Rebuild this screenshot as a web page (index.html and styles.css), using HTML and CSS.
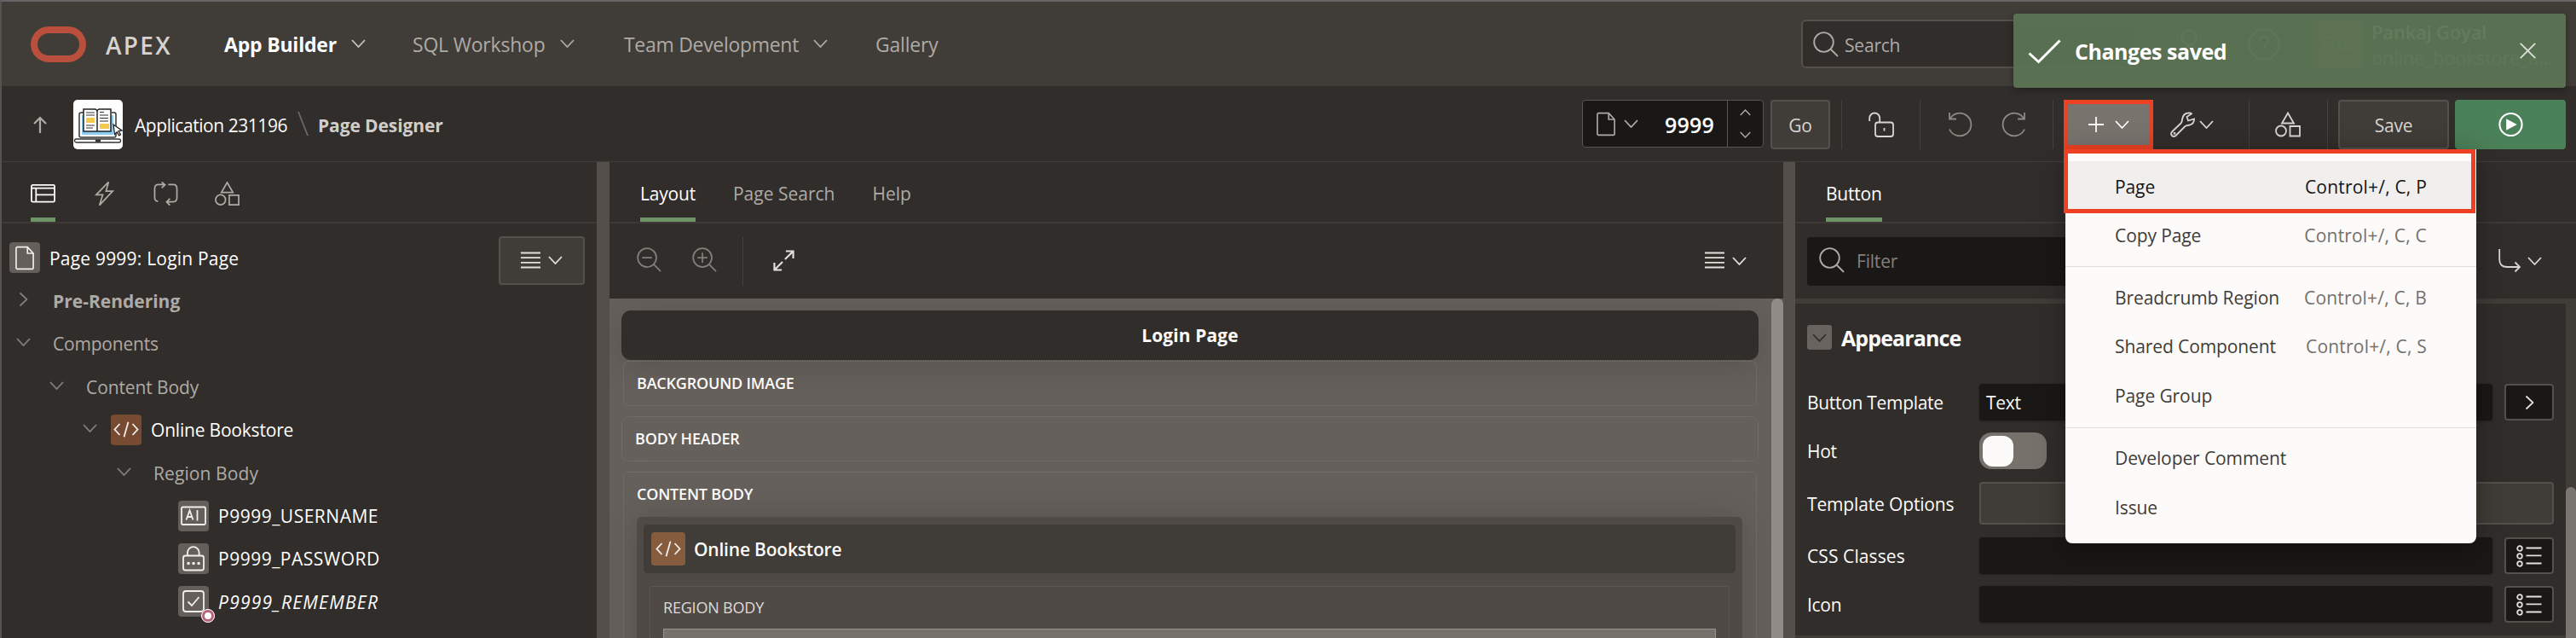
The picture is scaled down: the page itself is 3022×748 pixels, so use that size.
FILE: index.html
```html
<!DOCTYPE html>
<html lang="en">
<head>
<meta charset="utf-8">
<title>Page Designer</title>
<link rel="stylesheet" href="styles.css">
</head>
<body>
<svg class="defs" aria-hidden="true">
  <symbol id="chev" viewBox="0 0 17 10"><path d="M1 1l7.500 8L16 1"/></symbol>
  <symbol id="shapes" viewBox="0 0 30 30"><path d="M15 1.500l7 12H8z"/><circle cx="7" cy="22.500" r="6"/><path d="M17.500 17h11.500v11.500H17.500z"/></symbol>
  <symbol id="glass" viewBox="0 0 30 30"><circle cx="12.500" cy="12.500" r="11.300"/><path d="M20.500 20.500L29 29"/></symbol>
  <symbol id="lines" viewBox="0 0 24 20"><path d="M0 1.200h24M0 7h24M0 13h24M0 18.800h24"/></symbol>
  <symbol id="doc" viewBox="0 0 24 30"><path d="M3 1h12.500l7.500 8v18.500a1.500 1.500 0 0 1-1.500 1.500H2.500A1.500 1.500 0 0 1 1 27.500v-25A1.500 1.500 0 0 1 2.500 1zM15.500 1v8H23"/></symbol>
  <symbol id="code" viewBox="0 0 30 20"><path d="M7.500 3L1.500 9.500l6 6.500M22.500 3l6 6.500-6 6.500M17.500.8l-5 17.400"/></symbol>
  <symbol id="list" viewBox="0 0 30 26"><g><circle cx="4" cy="4" r="2.800"/><circle cx="4" cy="13" r="2.800"/><circle cx="4" cy="22" r="2.800"/></g><path d="M11.500 3.500H29.500M11.500 12.300H29.500M11.500 21.500H29.500"/></symbol>
</svg>
<div class="app">
  <header class="header">
    <svg class="logo" viewBox="0 0 65 42"><rect x="4" y="4" width="57" height="34" rx="17"/></svg>
    <span class="brand">APEX</span>
    <nav class="nav">
      <span class="nav-item builder current"><span class="t">App Builder</span><svg class="chev"><use href="#chev"/></svg></span>
      <span class="nav-item sql"><span class="t">SQL Workshop</span><svg class="chev"><use href="#chev"/></svg></span>
      <span class="nav-item team"><span class="t">Team Development</span><svg class="chev"><use href="#chev"/></svg></span>
      <span class="nav-item"><span class="t">Gallery</span></span>
    </nav>
    <div class="search"><svg class="i30"><use href="#glass"/></svg><span class="t">Search</span></div>
    <svg class="people" viewBox="0 0 28 36"><circle cx="10" cy="10" r="8.500"/><path d="M1 34c0-10 5-14 12-14M16 30a6 6 0 1 0 8-8"/></svg>
    <svg class="help" viewBox="0 0 38 38"><circle cx="19" cy="19" r="17.500"/><path d="M14 15a5 5 0 1 1 7 4.500q-2 1-2 4M19 26.500v2.500"/></svg>
    <span class="avatar">PG</span>
    <div class="user"><span>Pankaj Goyal</span><span>online_bookstore_a...</span></div>
  </header>

  <div class="toolbar">
    <svg class="up" viewBox="0 0 16 20"><path d="M8 20V2M1 9l7-7 7 7"/></svg>
    <svg class="app-icon" viewBox="0 0 58 58">
      <rect width="58" height="58" rx="5" fill="#fff"/>
      <path d="M10 18h37v23H10z" fill="#8dcdf2"/>
      <path d="M12 15H9q-2 0-2 2v25q0 2 2 2h39q2 0 2-2V17q0-2-2-2h-3" fill="none" stroke="#333" stroke-width="1.500"/>
      <path d="M12 11h14l2 1.500 2-1.500h14v26H12z" fill="#fff" stroke="#222" stroke-width="1.500"/>
      <path d="M28 12v25" stroke="#222" stroke-width="1.500"/>
      <path d="M15 21h10v6H15zM31 28h11v6H31z" fill="#f2c94c"/>
      <path d="M15 15h10M15 18h10M15 30h10M15 33h8M31 14.500h5M31 18h10M31 21.500h10M31 25h10" stroke="#333" stroke-width="1"/>
      <rect x="1.500" y="46" width="54" height="4" rx="2" fill="#fff" stroke="#333" stroke-width="1.300"/>
      <path d="M26 48h6" stroke="#333" stroke-width="3"/>
      <path d="M47 29l10 7-4 .8 2.500 4-1.800 1-2.500-4-2.700 2.700z" fill="#fff" stroke="#222" stroke-width="1.300"/>
    </svg>
    <span class="crumb-app t">Application 231196</span>
    <svg class="slash" viewBox="0 0 13 28"><path d="M1 0l11 28"/></svg>
    <span class="crumb-page t">Page Designer</span>
    <div class="page-picker">
      <svg class="doc"><use href="#doc"/></svg><svg class="chev"><use href="#chev"/></svg>
      <span class="num">9999</span>
      <span class="stepper"><svg class="flip"><use href="#chev"/></svg><svg><use href="#chev"/></svg></span>
    </div>
    <span class="btn go">Go</span>
    <i class="sep s1"></i>
    <svg class="lock" viewBox="0 0 30 30"><path d="M1.200 11V7.500a6 6 0 0 1 12 0V12"/><rect x="8" y="12.500" width="21" height="16.500" rx="3"/><path d="M18.500 19v3.500"/></svg>
    <i class="sep s2"></i>
    <svg class="undo" viewBox="0 0 28 30"><path d="M1 1v7.500h8M1.500 8.500A13.300 13.300 0 1 1 1 20.500"/></svg>
    <svg class="redo" viewBox="0 0 28 30"><path d="M27 1v7.500h-8M26.500 8.500A13.300 13.300 0 1 0 27 20.500"/></svg>
    <i class="sep s3"></i>
    <span class="create"><svg class="plus" viewBox="0 0 18 18"><path d="M9 0v18M0 9h18"/></svg><svg class="chev"><use href="#chev"/></svg></span>
    <svg class="wrench" viewBox="0 0 29 30"><path d="M2 23.500L12.500 13.500Q14 12 14 9Q15 2 21 1.500Q24 1 25 2.300L19.500 6L21 10.500L28 8.500Q28 14 23 15.500Q19 16 17.500 17L6.500 28Q4 30 2 28Q0 26 2 23.500z"/><circle cx="5" cy="25.300" r=".6"/></svg>
    <svg class="chev wchev"><use href="#chev"/></svg>
    <i class="sep s4"></i>
    <svg class="i30 shared"><use href="#shapes"/></svg>
    <i class="sep s5"></i>
    <span class="btn save">Save</span>
    <span class="run"><svg viewBox="0 0 30 30"><circle cx="15" cy="15" r="13.500"/><path class="solid" d="M9.500 8v14l13-7z"/></svg></span>
  </div>

  <div class="panes">
    <section class="pane tree-pane">
      <div class="tabs icon-tabs">
        <span class="tab on"><svg viewBox="0 0 30 30"><rect x="1" y="4.500" width="28" height="20.500" rx="1.500"/><path d="M1 8.500h28M6.500 8.500v16.500M6.500 16.500H29"/></svg></span>
        <span class="tab"><svg viewBox="0 0 30 30"><path d="M20 1L5 16.500h8L9 29 25 12h-8z"/></svg></span>
        <span class="tab"><svg viewBox="0 0 30 30"><path d="M13 4H6Q1.500 4 1.500 9v11q0 4 4 4.500M10 1l4 3.500L10 8M18 4h6q4.500 0 4.500 5v11q0 5-4.500 5h-8M20 21l-4 4 4 4"/></svg></span>
        <span class="tab"><svg viewBox="0 0 30 30"><use href="#shapes"/></svg></span>
      </div>
      <div class="tree">
        <div class="row root"><span class="ico"><svg class="doc"><use href="#doc"/></svg></span><span class="t lit">Page 9999: Login Page</span><span class="btn view"><svg class="lines"><use href="#lines"/></svg><svg class="chev"><use href="#chev"/></svg></span></div>
        <div class="row l1"><svg class="chev closed"><use href="#chev"/></svg><span class="t bold">Pre-Rendering</span></div>
        <div class="row l1"><svg class="chev"><use href="#chev"/></svg><span class="t">Components</span></div>
        <div class="row l2"><svg class="chev"><use href="#chev"/></svg><span class="t">Content Body</span></div>
        <div class="row l3"><svg class="chev"><use href="#chev"/></svg><span class="ico region"><svg class="code"><use href="#code"/></svg></span><span class="t lit">Online Bookstore</span></div>
        <div class="row l4"><svg class="chev"><use href="#chev"/></svg><span class="t">Region Body</span></div>
        <div class="row l5"><span class="ico"><svg viewBox="0 0 30 30"><rect x="1" y="4.500" width="28" height="20.500" rx="1.500"/><path d="M6.500 19.500l4-11 4 11M8 16h5M19.500 8v12.500"/></svg></span><span class="t lit item">P9999_USERNAME</span></div>
        <div class="row l5"><span class="ico"><svg viewBox="0 0 30 30"><path d="M8 11.500V8a6.800 6.800 0 0 1 13.600 0v3.500"/><rect x="3" y="11.500" width="24" height="17" rx="2.500"/><path class="dots" d="M9 20.500h.1M15 20.500h.1M21 20.500h.1"/></svg></span><span class="t lit item">P9999_PASSWORD</span></div>
        <div class="row l5"><span class="ico"><svg viewBox="0 0 30 30"><rect x="3" y="3" width="24" height="24" rx="3"/><path d="M8.500 15.500l4.500 4.500 8.500-10"/></svg><i class="badge"></i></span><span class="t lit it">P9999_REMEMBER</span></div>
      </div>
    </section>
    <i class="splitter"></i>
    <section class="pane layout-pane">
      <div class="tabs text-tabs"><span class="tab on">Layout</span><span class="tab">Page Search</span><span class="tab">Help</span></div>
      <div class="layout-tools">
        <svg class="zoom" viewBox="0 0 30 30"><circle cx="12.500" cy="12.500" r="11.300"/><path d="M20.500 20.500L29 29M6.500 12.500h12"/></svg>
        <svg class="zoom" viewBox="0 0 30 30"><circle cx="12.500" cy="12.500" r="11.300"/><path d="M20.500 20.500L29 29M6.500 12.500h12M12.500 6.500v12"/></svg>
        <i class="sep"></i>
        <svg class="expand" viewBox="0 0 26 26"><path d="M15.500 1.500h9v9M24.500 1.500L14.500 11.500M1.500 15.500v9h9M1.500 24.500l10-10"/></svg>
        <svg class="lines"><use href="#lines"/></svg><svg class="chev"><use href="#chev"/></svg>
      </div>
      <div class="canvas">
        <div class="page-title"><span>Login Page</span></div>
        <div class="slot in"><span>BACKGROUND IMAGE</span></div>
        <div class="slot"><span>BODY HEADER</span></div>
        <div class="slot in tall"><span>CONTENT BODY</span>
          <div class="region-box">
            <div class="region-head"><span class="ico region"><svg class="code"><use href="#code"/></svg></span><span class="t">Online Bookstore</span></div>
            <div class="region-body"><span>REGION BODY</span><div class="cell"></div></div>
          </div>
        </div>
        <i class="thumb"></i>
      </div>
    </section>
    <i class="splitter right"></i>
    <section class="pane props-pane">
      <div class="tabs text-tabs"><span class="tab on">Button</span></div>
      <div class="filter-row">
        <div class="filter"><svg class="i30"><use href="#glass"/></svg><span class="hint">Filter</span></div>
        <svg class="goto" viewBox="0 0 27 28"><path d="M1.200 0v12q0 9 9 9H25M19.500 15.500l5.500 5.500-5.500 5.500"/></svg><svg class="chev"><use href="#chev"/></svg>
      </div>
      <div class="props">
        <div class="group"><span class="fold"><svg class="chev"><use href="#chev"/></svg></span><span>Appearance</span></div>
        <div class="prop p1"><label>Button Template</label><span class="field">Text</span><span class="mini"><svg class="chev closed"><use href="#chev"/></svg></span></div>
        <div class="prop p2"><label>Hot</label><span class="toggle"></span></div>
        <div class="prop p3"><label>Template Options</label><span class="btn wide"></span></div>
        <div class="prop p4"><label>CSS Classes</label><span class="field"></span><span class="mini"><svg class="list"><use href="#list"/></svg></span></div>
        <div class="prop p5"><label>Icon</label><span class="field"></span><span class="mini"><svg class="list"><use href="#list"/></svg></span></div>
        <div class="scroll"><i></i></div>
      </div>
    </section>
  </div>

  <div class="toast"><svg class="check" viewBox="0 0 39 28"><path d="M1.500 16.500l11 10L37.500 1.500"/></svg><span class="message">Changes saved</span><svg class="close" viewBox="0 0 19 19"><path d="M.8.800l17.400 17.400M18.200.8L.8 18.200"/></svg></div>

  <div class="menu">
    <div class="menu-item hover"><span>Page</span><kbd>Control+/, C, P</kbd></div>
    <div class="menu-item copy"><span>Copy Page</span><kbd>Control+/, C, C</kbd></div>
    <hr>
    <div class="menu-item"><span>Breadcrumb Region</span><kbd>Control+/, C, B</kbd></div>
    <div class="menu-item"><span>Shared Component</span><kbd>Control+/, C, S</kbd></div>
    <div class="menu-item"><span>Page Group</span></div>
    <hr>
    <div class="menu-item"><span>Developer Comment</span></div>
    <div class="menu-item"><span>Issue</span></div>
  </div>
  <i class="mark"></i>
</div>
</body>
</html>
```
FILE: styles.css
```css
* { box-sizing: border-box; }
body { margin: 0; background: #312d2a; font-family: "Open Sans", "Noto Sans", sans-serif; font-size: 21px; letter-spacing: -0.2px; color: #fcfbfa; }
.defs { position: absolute; width: 0; height: 0; }
svg { display: block; flex: none; fill: none; stroke: currentColor; stroke-width: 1.8; overflow: visible; }
span, label { white-space: nowrap; }
.app { position: relative; width: 3022px; height: 748px; overflow: hidden; border-top: 2px solid #656565; border-left: 2px solid #55524f; }
.chev { width: 17px; height: 10px; }
.closed { transform: rotate(-90deg); }
.i30 { width: 30px; height: 30px; }
.lines { width: 23px; height: 20px; stroke-width: 2; }
.doc { width: 22px; height: 29px; }
.code { width: 30px; height: 20px; }

/* top navigation */
.header { height: 99px; display: flex; align-items: center; padding-left: 34px; background: #403c37; color: #aeaaa6; font-size: 23px; }
.logo { width: 65px; height: 42px; color: #ba4f3d; stroke-width: 8; }
.brand { width: 138px; margin: 2px 0 0 23px; padding-right: 1px; font-size: 28px; font-weight: 600; letter-spacing: 2.3px; color: #d5d3d0; flex: none; }
.nav { display: flex; width: 1850px; margin-left: 1px; flex: none; }
.nav-item { display: flex; align-items: center; gap: 17px; padding-top: 1px; }
.nav-item .chev { margin-top: -2px; }
.builder { width: 221px; }
.sql { width: 248px; }
.team { width: 295px; letter-spacing: -0.3px; }
.current { color: #fff; font-weight: 700; }
.current .chev { color: #c5c2bf; }
.search { width: 394px; height: 57px; display: flex; align-items: center; gap: 7px; padding-left: 12px; background: #312d2a; border: 2px solid #55504b; border-radius: 6px; font-size: 21px; flex: none; }
.search .t { font-weight: 500; padding-top: 2px; }
.people { width: 28px; height: 36px; margin-left: 51px; }
.help { width: 38px; height: 38px; margin-left: 51px; }
.avatar { width: 58px; height: 57px; margin-left: 38px; background: #8f5a32; border-radius: 4px; text-align: center; line-height: 57px; font-weight: 700; color: #69a080; font-size: 26px; flex: none; }
.user { width: 215px; margin-left: 11px; display: flex; flex-direction: column; line-height: 30px; font-size: 22px; }
.user span:first-child { font-weight: 600; color: #fff; }

/* page toolbar */
.toolbar { height: 89px; display: flex; align-items: center; padding: 2px 0 0 37px; border-bottom: 1px solid #423e3a; color: #d8d5d2; }
.toolbar > .t { padding-top: 1px; }
.up { width: 16px; height: 20px; color: #aeaaa6; stroke-width: 2.2; }
.app-icon { width: 58px; height: 58px; margin-left: 31px; stroke: none; }
.crumb-app { width: 191px; margin-left: 14px; color: #fcfbfa; letter-spacing: -0.45px; }
.slash { width: 13px; height: 28px; color: #6d6864; margin-top: -2px; }
.crumb-page { width: 1483px; margin-left: 11px; font-weight: 700; letter-spacing: -0.1px; color: #d0cdca; flex: none; }
.page-picker { width: 213px; height: 56px; display: flex; align-items: center; padding-left: 16px; background: #1a1816; border: 1px solid #5a5550; border-radius: 4px; margin-top: -2px; color: #aeaaa6; flex: none; }
.page-picker .chev { margin-left: 10px; }
.num { width: 73px; margin-left: 31px; padding-top: 2px; font-size: 25px; font-weight: 600; letter-spacing: 0.2px; color: #fff; }
.stepper { height: 54px; flex: 1; display: flex; flex-direction: column; align-items: center; justify-content: space-between; padding: 10px 0; border-left: 1px solid #5a5550; }
.stepper svg { width: 13px; height: 8px; }
.flip { transform: scaleY(-1); }
.btn { background: #403c37; border: 2px solid #54504b; border-radius: 4px; display: flex; align-items: center; justify-content: center; height: 58px; flex: none; font-weight: 600; }
.go { width: 70px; margin-left: 8px; padding-top: 2px; font-weight: 500; }
.sep { width: 1px; height: 58px; background: #45413d; flex: none; }
.s1 { margin-left: 13px; }
.lock { width: 30px; height: 30px; margin-left: 31px; }
.s2 { margin-left: 30px; }
.undo { width: 28px; height: 30px; margin-left: 33px; color: #8d8985; }
.redo { width: 28px; height: 30px; margin-left: 34px; color: #8d8985; }
.s3 { margin-left: 32px; }
.create { width: 105px; height: 58px; margin-left: 12px; display: flex; align-items: center; gap: 13px; padding-left: 24px; border: 5px solid #ee4023; background: #79736e; color: #fcfbfa; stroke-width: 2; flex: none; }
.plus { width: 18px; height: 18px; }
.wrench { width: 29px; height: 30px; margin-left: 20px; }
.wchev { margin-left: 5px; }
.s4 { margin-left: 41px; }
.shared { margin-left: 30px; }
.s5 { margin-left: 31px; }
.save { width: 130px; margin-left: 12px; padding-top: 2px; font-weight: 500; }
.run { width: 130px; height: 58px; margin-left: 7px; display: flex; align-items: center; justify-content: center; background: #4b8159; border-radius: 4px; color: #fff; flex: none; }
.run svg { width: 29px; height: 30px; stroke-width: 2.2; }
.solid { fill: currentColor; stroke: none; }

/* pane frame */
.panes { display: flex; height: 558px; }
.pane { flex: none; }
.splitter { width: 15px; background: #544f4b; flex: none; }
.right { width: 14px; }
.tabs { height: 72px; display: flex; border-bottom: 2px solid #3d3936; color: #aeaaa6; }
.tab { height: 70px; display: flex; align-items: center; border-bottom: 5px solid transparent; padding-top: 8px; letter-spacing: 0; }
.on { border-color: #6f9468; color: #fff; }
.icon-tabs { padding-left: 34px; gap: 43px; }
.icon-tabs svg { width: 29px; height: 30px; }
.text-tabs { padding-left: 36px; gap: 44px; }
.text-tabs .on { font-weight: 500; letter-spacing: -0.2px; }

/* rendering tree */
.tree-pane { width: 698px; }
.tree { padding-top: 15px; color: #aeaaa6; }
.row { height: 50.4px; display: flex; align-items: center; color: #aeaaa6; }
.row .t { padding-top: 1px; }
.row > .chev { color: #83807c; margin-right: 26px; margin-top: -3px; }
.lit { color: #fff; font-weight: 500; }
.bold { font-weight: 700; letter-spacing: 0; }
.item { letter-spacing: 0.5px; }
.it { font-style: italic; letter-spacing: 1.25px; }
.ico { position: relative; width: 36px; height: 36px; display: flex; align-items: center; justify-content: center; background: #655f5b; border-radius: 4px; color: #f1efed; flex: none; }
.ico svg:not(.doc):not(.code) { width: 30px; height: 30px; }
.region { background: #774a32; }
.ico + .t { margin-left: 11px; }
.root { padding-left: 9px; letter-spacing: 0.2px; }
.view { width: 101px; height: 57px; margin: 6px 14px 0 auto; gap: 9px; color: #e4e1dd; }
.l1 { padding-left: 17px; }
.l2 { padding-left: 56px; letter-spacing: -0.1px; }
.l3 { padding-left: 95px; letter-spacing: -0.2px; }
.l3 > .chev { margin-right: 16px; }
.l4 { padding-left: 135px; letter-spacing: 0.1px; }
.l5 { padding-left: 207px; }
.dots { stroke-width: 3.5; stroke-linecap: round; }
.badge { position: absolute; left: 27px; top: 27px; width: 16px; height: 16px; border-radius: 50%; background: #fff; border: 4px solid #b5647c; outline: 1px solid #fff; outline-offset: -1px; }

/* layout canvas */
.layout-pane { width: 1377px; }
.layout-tools { height: 88px; display: flex; align-items: center; padding-left: 32px; color: #83807c; }
.zoom { width: 29px; height: 29px; margin: -3px 36px 0 0; }
.layout-tools .sep { height: 57px; margin-right: 35px; margin-left: -6px; }
.expand { width: 25px; height: 25px; margin-top: -2px; color: #e4e1dd; stroke-width: 2.2; }
.layout-tools .lines { margin-left: auto; margin-top: -2px; color: #e4e1dd; }
.layout-tools .chev { margin: -1px 43px 0 9px; color: #e4e1dd; }
.canvas { position: relative; height: 398px; padding: 14px 29px 0 14px; background: #65605b; overflow: hidden; }
.page-title { height: 58px; display: flex; align-items: center; justify-content: center; background: #312d2a; border-radius: 11px; font-weight: 700; letter-spacing: 0.1px; box-shadow: 0 8px 40px rgba(0, 0, 0, .14); }
.slot { height: 53px; margin-bottom: 12px; padding: 0 0 0 15px; line-height: 51px; font-size: 18px; font-weight: 600; border: 1px dotted #7d7772; border-radius: 9px; }
.in { margin-left: 2px; margin-right: 2px; border-radius: 6px; }
.page-title + .slot { margin-top: 1px; }
.tall { height: 300px; padding-right: 16px; }
.region-box { height: 300px; margin-top: 1px; padding: 9px 8px; background: #4f4a46; border-radius: 6px; box-shadow: 0 0 40px rgba(0, 0, 0, .16); line-height: normal; }
.region-head { height: 57px; display: flex; align-items: center; padding-left: 9px; background: #403c37; border-radius: 5px; font-size: 21px; }
.region-head .ico { width: 40px; height: 39px; margin-right: -1px; background: #865c3f; }
.region-body { height: 200px; margin: 15px 7px 0; padding: 12px 15px 0; border: 1px dotted #66615c; border-radius: 3px; font-weight: 500; color: #dedbd8; }
.cell { height: 100px; margin-top: 13px; background: #77716c; border: 1px solid #97928d; }
.thumb { position: absolute; right: 0; top: 0; width: 14px; height: 500px; border-radius: 7px; background: #918c87; }

/* property editor */
.props-pane { width: 916px; }
.filter-row { height: 94px; display: flex; align-items: center; padding: 0 40px 6px 14px; border-bottom: 6px solid #403c38; color: #d8d5d2; }
.filter { width: 760px; height: 57px; display: flex; align-items: center; gap: 14px; padding-left: 14px; background: #1a1816; border-radius: 4px; color: #aeaaa6; margin-top: 6px; }
.filter svg { margin-top: -3px; }
.hint { color: #83807c; }
.goto { width: 27px; height: 28px; margin: 5px 7px 0 auto; }
.filter-row > .chev { margin-top: 6px; }
.props { position: relative; height: 392px; padding: 22px 26px 0 14px; border-bottom: 3px solid #403c38; font-weight: 500; letter-spacing: -0.3px; }
.group { height: 35px; display: flex; align-items: center; gap: 11px; font-size: 25px; font-weight: 700; letter-spacing: -0.9px; }
.fold { width: 29px; height: 29px; display: flex; align-items: center; justify-content: center; background: #68635e; color: #312d2a; border-radius: 3px; }
.prop { display: flex; height: 43px; align-items: center; }
.prop label { width: 202px; padding-top: 1px; flex: none; }
.p1 { margin-top: 37px; }
.p2 { margin-top: 14px; }
.p3 { margin-top: 15px; height: 50px; letter-spacing: -0.15px; }
.p4 { margin-top: 15px; }
.p4 label { letter-spacing: 0.1px; }
.p5 { margin-top: 14px; }
.field { width: 602px; height: 43px; line-height: 44px; padding-left: 8px; background: #1a1816; border-radius: 4px; box-shadow: 0 1px 3px rgba(0, 0, 0, .3); }
.mini { width: 58px; height: 43px; margin-left: 14px; display: flex; align-items: center; justify-content: center; background: #1a1816; border: 2px solid #54504b; border-radius: 4px; color: #e4e1dd; }
.list { width: 30px; height: 26px; }
.toggle { width: 79px; height: 43px; padding: 4px; background: #77716c; border-radius: 14px; }
.toggle::before { content: ""; display: block; width: 36px; height: 36px; border-radius: 12px; background: #fcfbfa; }
.wide { width: 674px; height: 50px; }
.scroll { position: absolute; right: 0; top: 0; width: 12px; height: 392px; background: #403c38; }
.scroll i { display: block; height: 400px; margin-top: 215px; background: #7b7672; border-radius: 6px; }

/* overlays */
.toast { position: absolute; left: 2360px; top: 14px; width: 648px; height: 87px; display: flex; align-items: center; padding: 0 35px 0 17px; background: rgba(92, 115, 84, .95); border-radius: 4px; box-shadow: 0 3px 8px rgba(0, 0, 0, .3); color: #fff; font-size: 25px; font-weight: 700; letter-spacing: -0.45px; }
.check { width: 39px; height: 28px; stroke-width: 3; }
.message { margin-left: 16px; }
.close { width: 19px; height: 19px; margin: 0 0 0 auto; color: #dbe1d8; }
.menu { position: absolute; left: 2421px; top: 173px; width: 482px; height: 462px; padding-top: 14px; background: #fcfbfa; border-radius: 0 0 8px 8px; box-shadow: 0 8px 36px rgba(0, 0, 0, .35); color: #403c38; letter-spacing: -0.1px; }
.menu-item { height: 57.500px; display: flex; align-items: center; justify-content: space-between; padding: 0 58px; }
.menu kbd { font: inherit; letter-spacing: 0.2px; color: #74706d; }
.menu .hover { height: 57px; padding-top: 2px; background: #f1efed; color: #161513; }
.menu .hover kbd { color: #161513; }
.menu .copy { height: 58px; padding-top: 2px; }
.menu hr { height: 1px; margin: 8px 0 7px; border: 0; background: #dfdddb; }
.mark { position: absolute; left: 2419px; top: 173px; width: 483px; height: 75px; border: 5px solid #ee4023; }
```
